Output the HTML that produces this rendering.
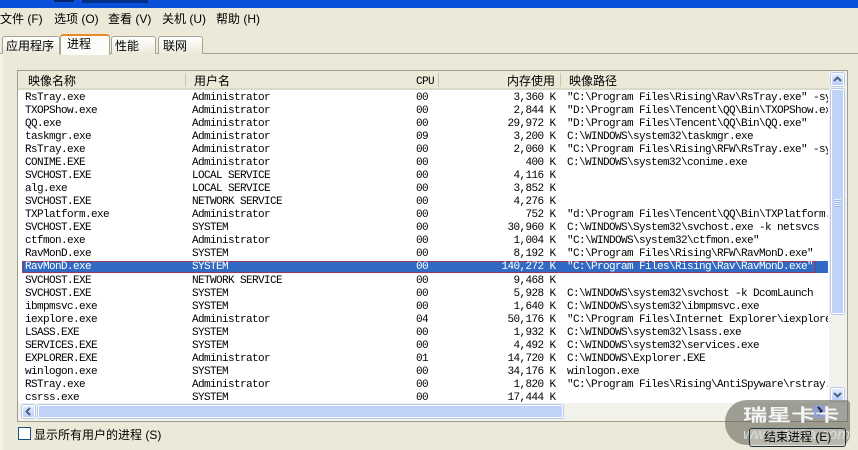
<!DOCTYPE html>
<html><head><meta charset="utf-8"><style>
*{box-sizing:border-box}
html,body{margin:0;padding:0}
body{width:858px;height:450px;overflow:hidden;background:#ece9d8;position:relative;font-family:"Liberation Mono","Noto Serif CJK SC",monospace;color:#000}
div,span{position:absolute;white-space:pre}
.c{font-family:"Liberation Sans","WenQuanYi Zen Hei","Noto Sans CJK SC",sans-serif;font-size:12px;line-height:14px}
.r{left:22px;width:806px;height:13px;font-size:11px;letter-spacing:-.6px;line-height:13px;overflow:hidden}
.r span{top:0}
.n{left:3px}.u{left:170px}.p{left:394px}.m{left:440px;width:93.5px;text-align:right}.f{left:545px;width:261px;overflow:hidden}
.tab{top:36px;height:18px;background:linear-gradient(#fff,#ece9d8);border:1px solid #a5a595;border-bottom:0;border-radius:3px 3px 0 0}
.btn{background:linear-gradient(#e3ecfd,#b9cdf6);border:1px solid #fff;border-radius:2px;box-shadow:0 0 0 1px #b5c9ef}
.hd{top:74px;font-size:12px}
.sep{top:73px;width:1px;height:14px;background:#c7c5b2}
</style></head><body>
<div style="left:0;top:0;width:858px;height:8px;background:#0a4fd8"></div>
<div style="left:54px;top:0;width:20px;height:2px;background:#03256e"></div>
<div style="left:82px;top:0;width:66px;height:3px;background:#03256e;opacity:.75"></div>
<div style="left:0;top:8px;width:858px;height:20px;background:#ece9d8"></div>
<div class="c" style="left:0;top:12px">文件 (F)</div>
<div class="c" style="left:54px;top:12px">选项 (O)</div>
<div class="c" style="left:108px;top:12px">查看 (V)</div>
<div class="c" style="left:162px;top:12px">关机 (U)</div>
<div class="c" style="left:216px;top:12px">帮助 (H)</div>
<div style="left:0;top:53px;width:858px;height:1px;background:#a5a595"></div>
<div style="left:0;top:54px;width:858px;height:396px;background:#f4f2e8"></div>
<div style="left:3px;top:54px;width:855px;height:396px;background:#ece9d8"></div>
<div class="tab" style="left:2px;width:58px"></div><div class="c" style="left:6px;top:39px">应用程序</div>
<div class="tab" style="left:60px;top:34px;width:50px;height:21px;background:#fcfcf9;border-top:2px solid #e68b2c;border-color:#e68b2c #a5a595 transparent"></div><div class="c" style="left:67px;top:37px">进程</div>
<div class="tab" style="left:111px;width:45px"></div><div class="c" style="left:115px;top:39px">性能</div>
<div class="tab" style="left:158px;width:45px"></div><div class="c" style="left:163px;top:39px">联网</div>

<div style="left:17px;top:70px;width:831px;height:352px;background:#fff;border:1px solid #9d9d92"></div>
<div style="left:18px;top:71px;width:829px;height:19px;background:#ece9d8;border-bottom:2px solid #dcd9c6"></div>
<div class="c hd" style="left:28px;top:74px">映像名称</div>
<div class="sep" style="left:185px"></div>
<div class="c hd" style="left:194px;top:74px">用户名</div>
<div class="sep" style="left:438px"></div>
<div style="left:416px;top:76px;font-size:11px;letter-spacing:-.6px;line-height:13px">CPU</div>
<div class="c hd" style="left:507px;top:74px">内存使用</div>
<div class="sep" style="left:560px"></div>
<div class="c hd" style="left:569px;top:74px">映像路径</div>

<div style="left:22px;top:261px;width:806px;height:12px;background:#316ac5"></div>

<div class="r" style="top:92px"><span class="n">RsTray.exe</span><span class="u">Administrator</span><span class="p">00</span><span class="m">3,360 K</span><span class="f">"C:\Program Files\Rising\Rav\RsTray.exe" -sy</span></div>
<div class="r" style="top:105px"><span class="n">TXOPShow.exe</span><span class="u">Administrator</span><span class="p">00</span><span class="m">2,844 K</span><span class="f">"D:\Program Files\Tencent\QQ\Bin\TXOPShow.ex</span></div>
<div class="r" style="top:118px"><span class="n">QQ.exe</span><span class="u">Administrator</span><span class="p">00</span><span class="m">29,972 K</span><span class="f">"D:\Program Files\Tencent\QQ\Bin\QQ.exe"</span></div>
<div class="r" style="top:131px"><span class="n">taskmgr.exe</span><span class="u">Administrator</span><span class="p">09</span><span class="m">3,200 K</span><span class="f">C:\WINDOWS\system32\taskmgr.exe</span></div>
<div class="r" style="top:144px"><span class="n">RsTray.exe</span><span class="u">Administrator</span><span class="p">00</span><span class="m">2,060 K</span><span class="f">"C:\Program Files\Rising\RFW\RsTray.exe" -sy</span></div>
<div class="r" style="top:157px"><span class="n">CONIME.EXE</span><span class="u">Administrator</span><span class="p">00</span><span class="m">400 K</span><span class="f">C:\WINDOWS\system32\conime.exe</span></div>
<div class="r" style="top:170px"><span class="n">SVCHOST.EXE</span><span class="u">LOCAL SERVICE</span><span class="p">00</span><span class="m">4,116 K</span></div>
<div class="r" style="top:183px"><span class="n">alg.exe</span><span class="u">LOCAL SERVICE</span><span class="p">00</span><span class="m">3,852 K</span></div>
<div class="r" style="top:196px"><span class="n">SVCHOST.EXE</span><span class="u">NETWORK SERVICE</span><span class="p">00</span><span class="m">4,276 K</span></div>
<div class="r" style="top:209px"><span class="n">TXPlatform.exe</span><span class="u">Administrator</span><span class="p">00</span><span class="m">752 K</span><span class="f">"d:\Program Files\Tencent\QQ\Bin\TXPlatform.</span></div>
<div class="r" style="top:222px"><span class="n">SVCHOST.EXE</span><span class="u">SYSTEM</span><span class="p">00</span><span class="m">30,960 K</span><span class="f">C:\WINDOWS\System32\svchost.exe -k netsvcs</span></div>
<div class="r" style="top:235px"><span class="n">ctfmon.exe</span><span class="u">Administrator</span><span class="p">00</span><span class="m">1,004 K</span><span class="f">"C:\WINDOWS\system32\ctfmon.exe"</span></div>
<div class="r" style="top:248px"><span class="n">RavMonD.exe</span><span class="u">SYSTEM</span><span class="p">00</span><span class="m">8,192 K</span><span class="f">"C:\Program Files\Rising\RFW\RavMonD.exe"</span></div>
<div style="left:23px;top:261px;width:793px;height:12px;border:1px solid rgba(190,40,50,.75)"></div>
<div class="r" style="top:261px;color:#fff"><span class="n">RavMonD.exe</span><span class="u">SYSTEM</span><span class="p">00</span><span class="m">140,272 K</span><span class="f">"C:\Program Files\Rising\Rav\RavMonD.exe"</span></div>
<div class="r" style="top:275px"><span class="n">SVCHOST.EXE</span><span class="u">NETWORK SERVICE</span><span class="p">00</span><span class="m">9,468 K</span></div>
<div class="r" style="top:288px"><span class="n">SVCHOST.EXE</span><span class="u">SYSTEM</span><span class="p">00</span><span class="m">5,928 K</span><span class="f">C:\WINDOWS\system32\svchost -k DcomLaunch</span></div>
<div class="r" style="top:301px"><span class="n">ibmpmsvc.exe</span><span class="u">SYSTEM</span><span class="p">00</span><span class="m">1,640 K</span><span class="f">C:\WINDOWS\system32\ibmpmsvc.exe</span></div>
<div class="r" style="top:314px"><span class="n">iexplore.exe</span><span class="u">Administrator</span><span class="p">04</span><span class="m">50,176 K</span><span class="f">"C:\Program Files\Internet Explorer\iexplore</span></div>
<div class="r" style="top:327px"><span class="n">LSASS.EXE</span><span class="u">SYSTEM</span><span class="p">00</span><span class="m">1,932 K</span><span class="f">C:\WINDOWS\system32\lsass.exe</span></div>
<div class="r" style="top:340px"><span class="n">SERVICES.EXE</span><span class="u">SYSTEM</span><span class="p">00</span><span class="m">4,492 K</span><span class="f">C:\WINDOWS\system32\services.exe</span></div>
<div class="r" style="top:353px"><span class="n">EXPLORER.EXE</span><span class="u">Administrator</span><span class="p">01</span><span class="m">14,720 K</span><span class="f">C:\WINDOWS\Explorer.EXE</span></div>
<div class="r" style="top:366px"><span class="n">winlogon.exe</span><span class="u">SYSTEM</span><span class="p">00</span><span class="m">34,176 K</span><span class="f">winlogon.exe</span></div>
<div class="r" style="top:379px"><span class="n">RSTray.exe</span><span class="u">Administrator</span><span class="p">00</span><span class="m">1,820 K</span><span class="f">"C:\Program Files\Rising\AntiSpyware\rstray.</span></div>
<div class="r" style="top:392px"><span class="n">csrss.exe</span><span class="u">SYSTEM</span><span class="p">00</span><span class="m">17,444 K</span></div>

<div style="left:829px;top:71px;width:18px;height:332px;background:#f3f2ea"></div>
<div class="btn" style="left:831px;top:73px;width:13px;height:13px"></div>
<svg style="position:absolute;left:832px;top:75px" width="11" height="9"><path d="M2 6L5.5 2.5L9 6" fill="none" stroke="#4d6185" stroke-width="2"/></svg>
<div class="btn" style="left:831px;top:89px;width:13px;height:225px;background:#c0d2f8"></div>
<div style="left:834px;top:199px;width:7px;height:8px;background:repeating-linear-gradient(#eef3fe 0 1px,#9db5e4 1px 2px)"></div>
<div class="btn" style="left:831px;top:388px;width:13px;height:13px"></div>
<svg style="position:absolute;left:832px;top:390px" width="11" height="9"><path d="M2 3L5.5 6.5L9 3" fill="none" stroke="#4d6185" stroke-width="2"/></svg>

<div style="left:18px;top:403px;width:811px;height:18px;background:#f3f2ea"></div>
<div class="btn" style="left:22px;top:405px;width:13px;height:13px"></div>
<svg style="position:absolute;left:24px;top:406px" width="9" height="11"><path d="M6 2L2.5 5.5L6 9" fill="none" stroke="#4d6185" stroke-width="2"/></svg>
<div class="btn" style="left:38px;top:405px;width:525px;height:13px;background:#c0d2f8"></div>

<div style="left:18px;top:427px;width:13px;height:13px;background:#fff;border:1px solid #1c5180"></div>
<div class="c" style="left:34px;top:428px">显示所有用户的进程 (S)</div>

<div style="left:725px;top:400px;width:125px;height:45px;background:rgba(105,105,95,.62);border-radius:22px 4px 10px 22px"></div>
<div style="left:813px;top:405px;width:13px;height:13px;background:#8f9fd0;border-radius:2px"></div>
<svg style="position:absolute;left:813px;top:405px" width="14" height="13"><path d="M5 2L8.5 6L5 10" fill="none" stroke="#1c2440" stroke-width="2"/></svg>
<div style="left:743px;top:406px;width:97px;font-family:'Liberation Sans','Noto Sans CJK SC',sans-serif;font-weight:bold;font-size:17px;line-height:20px;color:#f4f4f4;letter-spacing:0;transform-origin:0 50%;transform:scaleX(1.42)">瑞星卡卡</div>
<div style="left:743px;top:427px;font-family:'Liberation Sans',sans-serif;font-style:italic;font-size:15px;line-height:16px;letter-spacing:.3px;color:#dcdcdc">www.ikaka.com</div>
<div style="left:749px;top:428px;width:97px;height:19px;border:1px solid #1f3040;border-radius:3px;background:rgba(225,225,218,.45)"></div>
<div class="c" style="left:764px;top:430px">结束进程 (E)</div>
</body></html>
